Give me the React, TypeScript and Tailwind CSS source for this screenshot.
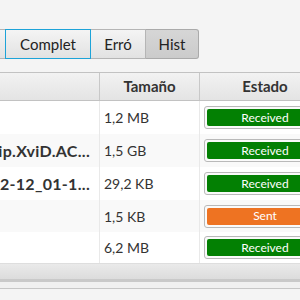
const rows = [
  { name: '', size: '1,2 MB', status: 'Received' },
  { name: 'ip.XviD.AC...', size: '1,5 GB', status: 'Received' },
  { name: '02-12_01-1...', size: '29,2 KB', status: 'Received' },
  { name: '', size: '1,5 KB', status: 'Sent' },
  { name: '', size: '6,2 MB', status: 'Received' },
];

const heights = ['h-[33px]', 'h-[33px]', 'h-[33px]', 'h-[32px]', 'h-[31px]'];

function StatusBar({ status }: { status: string }) {
  const sent = status === 'Sent';
  return (
    <div className="w-full rounded-[3px] border border-[#b9b9b9] bg-[#fafafa] p-[2px]">
      <div
        className={`flex h-[17px] items-center justify-center rounded-[2px] text-[12px] leading-none text-white ${
          sent ? 'bg-[#ee7322]' : 'bg-[#038003]'
        }`}
      >
        {status}
      </div>
    </div>
  );
}

export default function App() {
  return (
    <div
      className="relative h-[300px] w-[300px] overflow-hidden bg-[#f4f4f4] text-[#333]"
      style={{ fontFamily: 'Lato, "Open Sans", sans-serif' }}
    >
      {/* segmented toggle */}
      <div className="flex pt-[29px] text-[15px]">
        <div className="h-[30px] w-[5px] border-y border-[#b5b5b5] bg-gradient-to-b from-[#f4f4f4] to-[#e2e2e2]" />
        <div className="flex h-[30px] w-[86px] items-center justify-center border border-[#1da3d8] bg-gradient-to-b from-[#f4f4f4] to-[#e2e2e2] text-[#222]">
          Complet
        </div>
        <div className="flex h-[30px] w-[55px] items-center justify-center border-y border-r border-[#b5b5b5] bg-gradient-to-b from-[#f4f4f4] to-[#e2e2e2] text-[#222]">
          Erró
        </div>
        <div className="flex h-[30px] w-[53px] items-center justify-center rounded-r-[3px] border-y border-r border-[#aaaaaa] bg-gradient-to-b from-[#d6d6d6] to-[#cbcbcb] text-[#222]">
          Hist
        </div>
      </div>

      {/* table */}
      <div className="mt-[13px] w-[330px]">
        <div className="flex h-[29px] border-y border-[#c2c2c2] bg-gradient-to-b from-[#f2f2f2] to-[#e4e4e4] text-[15px] font-bold text-[#333]">
          <div className="w-[100px] border-r border-[#c8c8c8]" />
          <div className="flex w-[100px] items-center justify-center border-r border-[#c8c8c8]">Tamaño</div>
          <div className="flex w-[130px] items-center justify-center">Estado</div>
        </div>

        {rows.map((r, i) => (
          <div
            key={i}
            className={`flex ${heights[i]} text-[14px] ${i % 2 === 1 ? 'bg-[#f9f9f9]' : 'bg-white'}`}
          >
            <div className="flex w-[100px] items-center justify-end overflow-hidden whitespace-nowrap border-r border-[#e9e9e9] pr-[9px] text-[16px] font-bold tracking-[0.3px]">
              {r.name}
            </div>
            <div className="flex w-[100px] items-center border-r border-[#e9e9e9] pl-[4px]">{r.size}</div>
            <div className="flex w-[130px] items-center px-[4px]">
              <StatusBar status={r.status} />
            </div>
          </div>
        ))}

        {/* horizontal scrollbar strip */}
        <div className="h-px bg-[#dedede]" />
        <div className="h-[15px] bg-gradient-to-b from-[#eaeaea] to-[#dcdcdc]" />
        <div className="h-[3px] bg-[#c9c9c9]" />
        <div className="h-[6px] bg-[#f0f0f0]" />
        <div className="h-px bg-[#c6c6c6]" />
      </div>
    </div>
  );
}
